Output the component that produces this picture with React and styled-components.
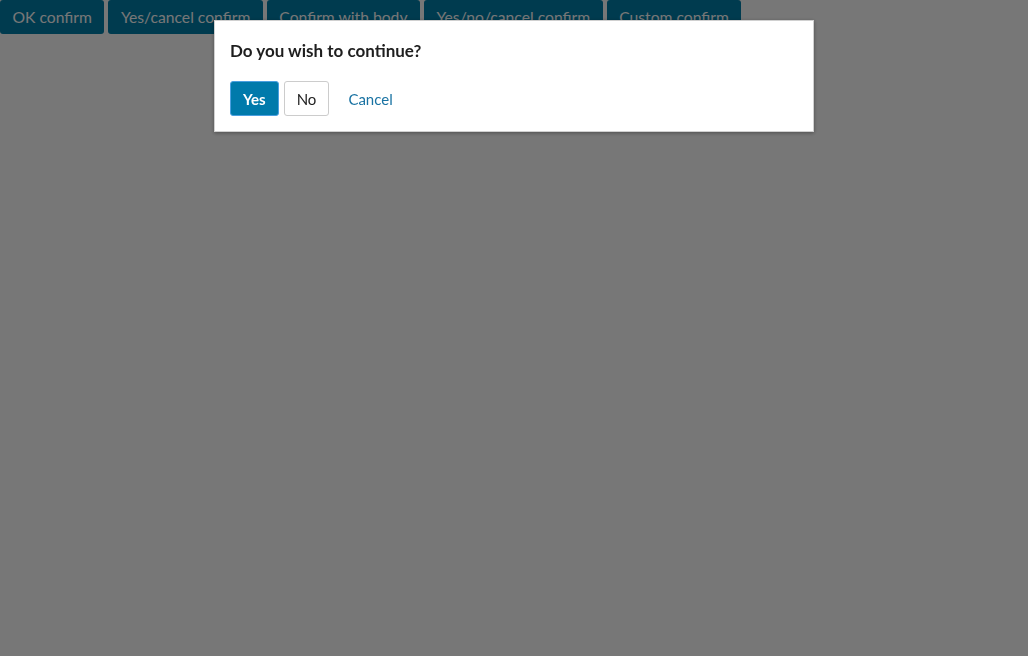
import React from "react";
import styled, { createGlobalStyle } from "styled-components";

const GlobalStyle = createGlobalStyle`
  html, body {
    margin: 0;
    padding: 0;
    background: #ffffff;
    font-family: Lato, "Open Sans", "Liberation Sans", sans-serif;
  }
`;

const Page = styled.div`
  width: 1028px;
  height: 656px;
`;

const Toolbar = styled.div`
  display: flex;
  gap: 4px;
`;

const DemoButton = styled.button`
  height: 34px;
  padding: 0 12.5px;
  border: none;
  border-radius: 3px;
  background: #007ea9;
  color: #ffffff;
  font-family: inherit;
  font-size: 15.7px;
  cursor: pointer;
`;

const Overlay = styled.div`
  position: fixed;
  inset: 0;
  background: rgba(0, 0, 0, 0.535);
  display: flex;
  justify-content: center;
  align-items: flex-start;
  padding-top: 20px;
`;

const Dialog = styled.div`
  width: 600px;
  box-sizing: border-box;
  background: #ffffff;
  padding: 18px 15px 15px;
  box-shadow: 0 1px 4px rgba(0, 0, 0, 0.35);
  border: 1px solid #d0d0d0;
`;

const Title = styled.h2`
  margin: 0 0 18px;
  font-size: 17px;
  font-weight: 700;
  line-height: 24px;
  color: #1e1e1e;
`;

const Actions = styled.div`
  display: flex;
  align-items: center;
  gap: 5px;
`;

const ActionButton = styled.button`
  height: 35px;
  box-sizing: border-box;
  padding: 0 ${(p) => (p.$link ? "13px" : "12px")};
  border-radius: 3px;
  font-family: inherit;
  font-size: 15px;
  cursor: pointer;
  border: 1px solid
    ${(p) => (p.$primary ? "#4a9fe0" : p.$link ? "transparent" : "#cccccc")};
  background: ${(p) => (p.$primary ? "#007aab" : "#ffffff")};
  color: ${(p) => (p.$primary ? "#ffffff" : p.$link ? "#1a73a3" : "#222222")};
  font-weight: ${(p) => (p.$primary ? 700 : 400)};
`;

export default function App() {
  return (
    <Page>
      <GlobalStyle />
      <Toolbar>
        <DemoButton>OK confirm</DemoButton>
        <DemoButton>Yes/cancel confirm</DemoButton>
        <DemoButton>Confirm with body</DemoButton>
        <DemoButton>Yes/no/cancel confirm</DemoButton>
        <DemoButton>Custom confirm</DemoButton>
      </Toolbar>
      <Overlay>
        <Dialog>
          <Title>Do you wish to continue?</Title>
          <Actions>
            <ActionButton $primary>Yes</ActionButton>
            <ActionButton>No</ActionButton>
            <ActionButton $link>Cancel</ActionButton>
          </Actions>
        </Dialog>
      </Overlay>
    </Page>
  );
}
